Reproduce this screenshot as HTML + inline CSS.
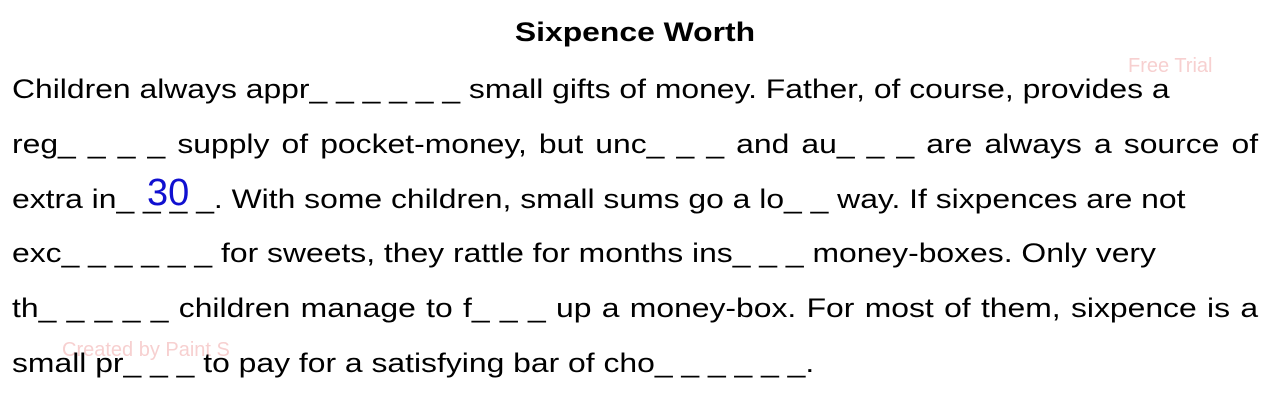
<!DOCTYPE html>
<html><head><meta charset="utf-8"><style>
body{margin:0;width:1284px;height:414px;background:#fff;position:relative;overflow:hidden;font-family:"Liberation Sans",Arial,sans-serif;color:#000}
.t{position:absolute;top:17px;left:0;width:1270px;text-align:center;font-weight:bold;font-size:27px;transform:scaleX(1.18);transform-origin:635px 0}
.l{position:absolute;left:12px;font-size:27px;white-space:nowrap;line-height:32px;transform:scaleX(1.18);transform-origin:0 0}
.j{width:1056px;text-align:justify;text-align-last:justify;white-space:normal}
.n{position:absolute;left:147px;top:173px;font-size:38px;color:#1010d0;line-height:40px}
.w{position:absolute;font-size:20px;color:#f7d0d0}
</style></head><body>
<div class="t">Sixpence Worth</div>
<div class="w" style="left:1128px;top:55px">Free Trial</div>
<div class="w" style="left:62px;top:339px">Created by Paint S</div>
<div class="l" style="top:73px">Children always appr_ _ _ _ _ _ small gifts of money. Father, of course, provides a</div>
<div class="l j" style="top:128px">reg_ _ _ _ supply of pocket-money, but unc_ _ _ and au_ _ _ are always a source of</div>
<div class="l" style="top:183px">extra in_ _ _ _. With some children, small sums go a lo_ _ way. If sixpences are not</div>
<div class="n">30</div>
<div class="l" style="top:237px">exc_ _ _ _ _ _ for sweets, they rattle for months ins_ _ _ money-boxes. Only very</div>
<div class="l j" style="top:292px">th_ _ _ _ _ children manage to f_ _ _ up a money-box. For most of them, sixpence is a</div>
<div class="l" style="top:347px">small pr_ _ _ to pay for a satisfying bar of cho_ _ _ _ _ _.</div>
</body></html>
